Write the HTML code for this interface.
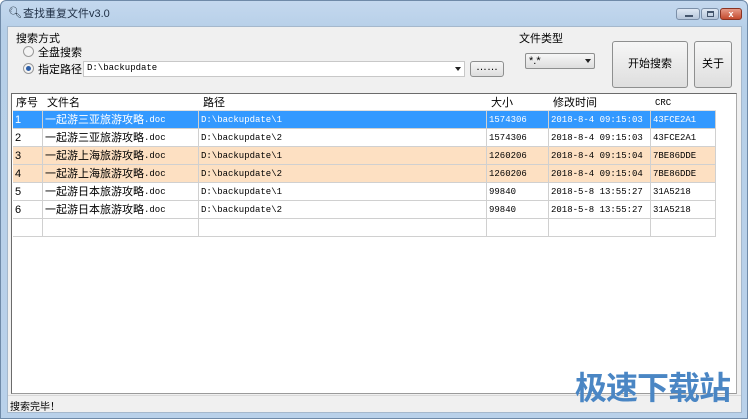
<!DOCTYPE html>
<html><head><meta charset="utf-8"><style>
*{margin:0;padding:0;box-sizing:border-box}
body{width:750px;height:419px;overflow:hidden;background:#fff;font-family:"Liberation Sans","Noto Sans CJK SC",sans-serif;font-size:11px;color:#000;position:relative}
.a{position:absolute}
.win{left:0;top:0;width:748px;height:419px;background:linear-gradient(#c4d8ee,#b6cfe8 30px,#b9d1ea);border:1px solid #6f8aa8;border-radius:6px 6px 0 0}
.client{left:7px;top:26px;width:735px;height:387px;background:#f0f0f0;border:1px solid #a5b8cc}
.mono{font-family:"Liberation Mono","Noto Sans CJK SC",monospace;font-size:9px;vertical-align:top}
.btn{background:linear-gradient(#f6f6f6,#dedede);border:1px solid #8e8f8f;border-radius:3px;text-align:center}
.row{position:absolute;left:13px;width:703px;height:18px;border-bottom:1px solid #d0d0d0}
.c{position:absolute;top:0;height:18px;line-height:18px;border-right:1px solid #d0d0d0;padding-left:2px;white-space:nowrap;overflow:hidden}
.c.mono{font-size:9px}
</style></head><body>
<div class="a win"></div>
<div class="a" style="left:8px;top:6px;font-size:11px;color:#1c2a3a">🔍︎</div>
<div class="a" style="left:23px;top:5px;font-size:11px;color:#1e2e44">查找重复文件v3.0</div>
<div class="a" style="left:676px;top:8px;width:24px;height:12px;border-radius:3px;background:linear-gradient(#dfe8f3,#b6c6da);border:1px solid #7b8fa8"><div class="a" style="left:8px;top:6px;width:8px;height:2px;background:#44556c"></div></div>
<div class="a" style="left:701px;top:8px;width:18px;height:12px;border-radius:3px;background:linear-gradient(#dfe8f3,#b6c6da);border:1px solid #7b8fa8"><div class="a" style="left:5px;top:2px;width:7px;height:6px;border:1px solid #44556c;border-top-width:2px"></div></div>
<div class="a" style="left:720px;top:8px;width:22px;height:12px;border-radius:3px;background:linear-gradient(#e69a88,#c44a2e);border:1px solid #8a3322;color:#fff;font-size:9px;line-height:10px;text-align:center;font-weight:bold">x</div>
<div class="a client"></div>
<div class="a" style="left:16px;top:30px">搜索方式</div>
<div class="a" style="left:23px;top:46px;width:11px;height:11px;border-radius:50%;border:1px solid #9a9a9a;background:#f4f4f4"></div>
<div class="a" style="left:38px;top:44px">全盘搜索</div>
<div class="a" style="left:23px;top:63px;width:11px;height:11px;border-radius:50%;border:1px solid #9a9a9a;background:#f4f4f4"><div class="a" style="left:2px;top:2px;width:5px;height:5px;border-radius:50%;background:#2e5fa8"></div></div>
<div class="a" style="left:38px;top:61px">指定路径</div>
<div class="a" style="left:83px;top:61px;width:382px;height:16px;background:#fff;border:1px solid #c8c8c8"></div>
<div class="a mono" style="left:87px;top:63px">D:\backupdate</div>
<div class="a" style="left:455px;top:67px;border-left:3px solid transparent;border-right:3px solid transparent;border-top:4px solid #222"></div>
<div class="a btn" style="left:470px;top:61px;width:34px;height:16px;line-height:10px">……</div>
<div class="a" style="left:519px;top:30px">文件类型</div>
<div class="a btn" style="left:525px;top:53px;width:70px;height:16px;border-radius:2px;text-align:left;padding-left:3px;line-height:14px">*.*</div>
<div class="a" style="left:585px;top:59px;border-left:3px solid transparent;border-right:3px solid transparent;border-top:4px solid #222"></div>
<div class="a btn" style="left:612px;top:41px;width:76px;height:47px;line-height:45px">开始搜索</div>
<div class="a btn" style="left:694px;top:41px;width:38px;height:47px;line-height:45px">关于</div>
<div class="a" style="left:11px;top:93px;width:726px;height:301px;background:#fff;border:1px solid #6b6b6b;border-right-color:#aaa;border-bottom-color:#9a9a9a"></div>
<div class="row" style="top:94px;height:17px;background:#fff;border-bottom:1px solid #e0e0e0">
<div class="c" style="left:0;width:30px;padding-left:3px;border:0">序号</div><div class="c" style="left:30px;width:156px;border:0;padding-left:4px">文件名</div><div class="c" style="left:186px;width:288px;border:0;padding-left:4px">路径</div><div class="c" style="left:474px;width:62px;border:0;padding-left:4px">大小</div><div class="c" style="left:536px;width:102px;border:0;padding-left:4px">修改时间</div><div class="c mono" style="left:638px;width:65px;border:0;padding-left:4px">CRC</div></div>
<div class="row" style="top:111px;background:#3399ff;color:#fff"><div class="c" style="left:0;width:30px">1</div><div class="c" style="left:30px;width:156px">一起游三亚旅游攻略<span class="mono" style="line-height:19px">.doc</span></div><div class="c mono" style="left:186px;width:288px">D:\backupdate\1</div><div class="c mono" style="left:474px;width:62px">1574306</div><div class="c mono" style="left:536px;width:102px">2018-8-4 09:15:03</div><div class="c mono" style="left:638px;width:65px">43FCE2A1</div></div>
<div class="row" style="top:129px;background:#fff"><div class="c" style="left:0;width:30px">2</div><div class="c" style="left:30px;width:156px">一起游三亚旅游攻略<span class="mono" style="line-height:19px">.doc</span></div><div class="c mono" style="left:186px;width:288px">D:\backupdate\2</div><div class="c mono" style="left:474px;width:62px">1574306</div><div class="c mono" style="left:536px;width:102px">2018-8-4 09:15:03</div><div class="c mono" style="left:638px;width:65px">43FCE2A1</div></div>
<div class="row" style="top:147px;background:#fde0c2"><div class="c" style="left:0;width:30px">3</div><div class="c" style="left:30px;width:156px">一起游上海旅游攻略<span class="mono" style="line-height:19px">.doc</span></div><div class="c mono" style="left:186px;width:288px">D:\backupdate\1</div><div class="c mono" style="left:474px;width:62px">1260206</div><div class="c mono" style="left:536px;width:102px">2018-8-4 09:15:04</div><div class="c mono" style="left:638px;width:65px">7BE86DDE</div></div>
<div class="row" style="top:165px;background:#fde0c2"><div class="c" style="left:0;width:30px">4</div><div class="c" style="left:30px;width:156px">一起游上海旅游攻略<span class="mono" style="line-height:19px">.doc</span></div><div class="c mono" style="left:186px;width:288px">D:\backupdate\2</div><div class="c mono" style="left:474px;width:62px">1260206</div><div class="c mono" style="left:536px;width:102px">2018-8-4 09:15:04</div><div class="c mono" style="left:638px;width:65px">7BE86DDE</div></div>
<div class="row" style="top:183px;background:#fff"><div class="c" style="left:0;width:30px">5</div><div class="c" style="left:30px;width:156px">一起游日本旅游攻略<span class="mono" style="line-height:19px">.doc</span></div><div class="c mono" style="left:186px;width:288px">D:\backupdate\1</div><div class="c mono" style="left:474px;width:62px">99840</div><div class="c mono" style="left:536px;width:102px">2018-5-8 13:55:27</div><div class="c mono" style="left:638px;width:65px">31A5218</div></div>
<div class="row" style="top:201px;background:#fff"><div class="c" style="left:0;width:30px">6</div><div class="c" style="left:30px;width:156px">一起游日本旅游攻略<span class="mono" style="line-height:19px">.doc</span></div><div class="c mono" style="left:186px;width:288px">D:\backupdate\2</div><div class="c mono" style="left:474px;width:62px">99840</div><div class="c mono" style="left:536px;width:102px">2018-5-8 13:55:27</div><div class="c mono" style="left:638px;width:65px">31A5218</div></div>
<div class="row" style="top:219px;background:#fff"><div class="c" style="left:0;width:30px"></div><div class="c" style="left:30px;width:156px"></div><div class="c" style="left:186px;width:288px"></div><div class="c" style="left:474px;width:62px"></div><div class="c" style="left:536px;width:102px"></div><div class="c" style="left:638px;width:65px"></div></div>
<div class="a" style="left:8px;top:395px;width:733px;height:1px;background:#d8d8d8"></div>
<div class="a" style="left:10px;top:398px;font-size:10px">搜索完毕！</div>
<div class="a" style="left:575px;top:368px;font-size:32px;font-weight:bold;letter-spacing:-1px;color:#4a86c4;line-height:40px">极速下载站</div>
</body></html>
